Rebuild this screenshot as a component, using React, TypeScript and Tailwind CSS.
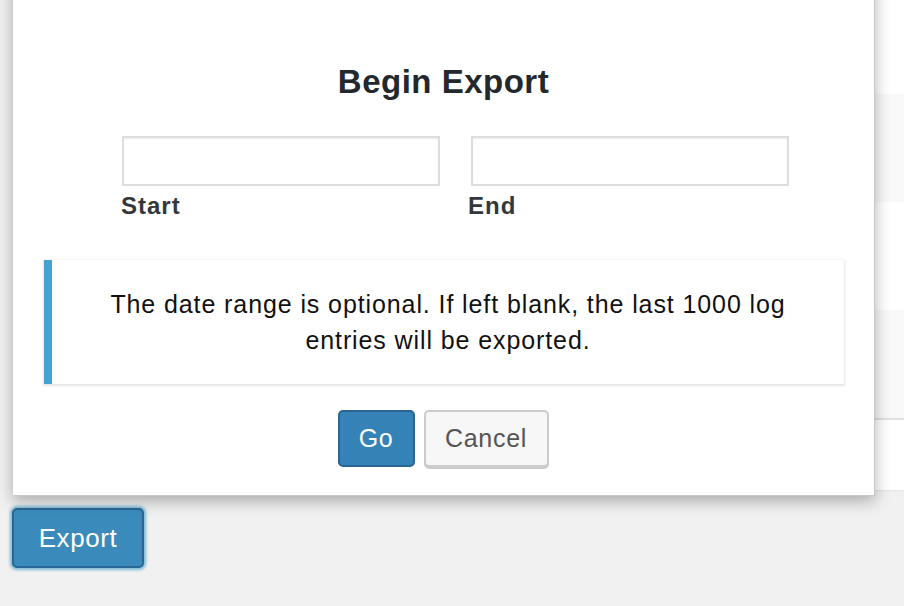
export default function App() {
  const rows = [
    { h: "h-[94px]", bg: "bg-white" },
    { h: "h-[108px]", bg: "bg-[#f9f9f9]" },
    { h: "h-[108px]", bg: "bg-white" },
    { h: "h-[108px]", bg: "bg-[#f9f9f9]" },
  ]

  return (
    <div className="relative w-[904px] h-[606px] overflow-hidden bg-[#f1f1f1] font-['Liberation_Sans',Arial,sans-serif]">
      {/* table behind the modal */}
      <div className="ml-[20px] bg-white shadow-[0_1px_1px_rgba(0,0,0,0.04)]">
        {rows.map((r, i) => (
          <div key={i} className={`${r.h} ${r.bg}`} />
        ))}
        <div className="h-[72px] bg-white border-t-2 border-[#e1e1e1]" />
      </div>

      <div className="pl-[12px] pt-[18px]">
        <button className="h-[60px] w-[132px] rounded-[5px] border-2 border-[#2a6797] bg-[#3a8bbb] text-[26px] tracking-[0.6px] text-white shadow-[0_0_3px_2px_rgba(30,140,190,0.55)]">
          Export
        </button>
      </div>

      {/* modal */}
      <div className="absolute left-[13px] top-[-20px] w-[862px] h-[516px] bg-white border-r border-b border-[#c8c8c8] shadow-[0_5px_15px_rgba(0,0,0,0.3)]">
        <div className="pt-[80px] text-center text-[33px] tracking-[0.5px] font-bold text-[#23282d] leading-[44px]">
          Begin Export
        </div>

        <div className="mt-[32px] ml-[109px] flex gap-[31px]">
          <div className="flex flex-col">
            <input className="h-[50px] w-[318px] border-2 border-[#dddddd] shadow-[inset_0_1px_2px_rgba(0,0,0,0.07)] outline-none" />
            <span className="mt-[6px] ml-[-1px] text-[24px] tracking-[1px] font-bold text-[#32373c] leading-[28px]">Start</span>
          </div>
          <div className="flex flex-col">
            <input className="h-[50px] w-[318px] border-2 border-[#dddddd] shadow-[inset_0_1px_2px_rgba(0,0,0,0.07)] outline-none" />
            <span className="mt-[6px] ml-[-3px] text-[24px] tracking-[1px] font-bold text-[#32373c] leading-[28px]">End</span>
          </div>
        </div>

        <div className="mt-[40px] mr-[30px] ml-[31px] h-[124px] flex items-center justify-center border-l-[8px] border-[#46a0d2] bg-white shadow-[0_1px_2px_1px_rgba(0,0,0,0.1)]">
          <p className="w-[700px] text-center text-[25px] tracking-[0.9px] leading-[36px] text-[#111]">
            The date range is optional. If left blank, the last 1000 log entries will be exported.
          </p>
        </div>

        <div className="mt-[26px] flex justify-center gap-[9px] pr-[1px]">
          <button className="h-[57px] w-[77px] rounded-[5px] border-2 border-[#2a6594] bg-[#3582b7] text-[25px] tracking-[0.5px] text-white">
            Go
          </button>
          <button className="h-[57px] w-[125px] rounded-[5px] border-2 border-[#cccccc] bg-[#f7f7f7] text-[25px] tracking-[0.7px] text-[#555555] shadow-[0_2px_0_#cccccc]">
            Cancel
          </button>
        </div>
      </div>
    </div>
  )
}
